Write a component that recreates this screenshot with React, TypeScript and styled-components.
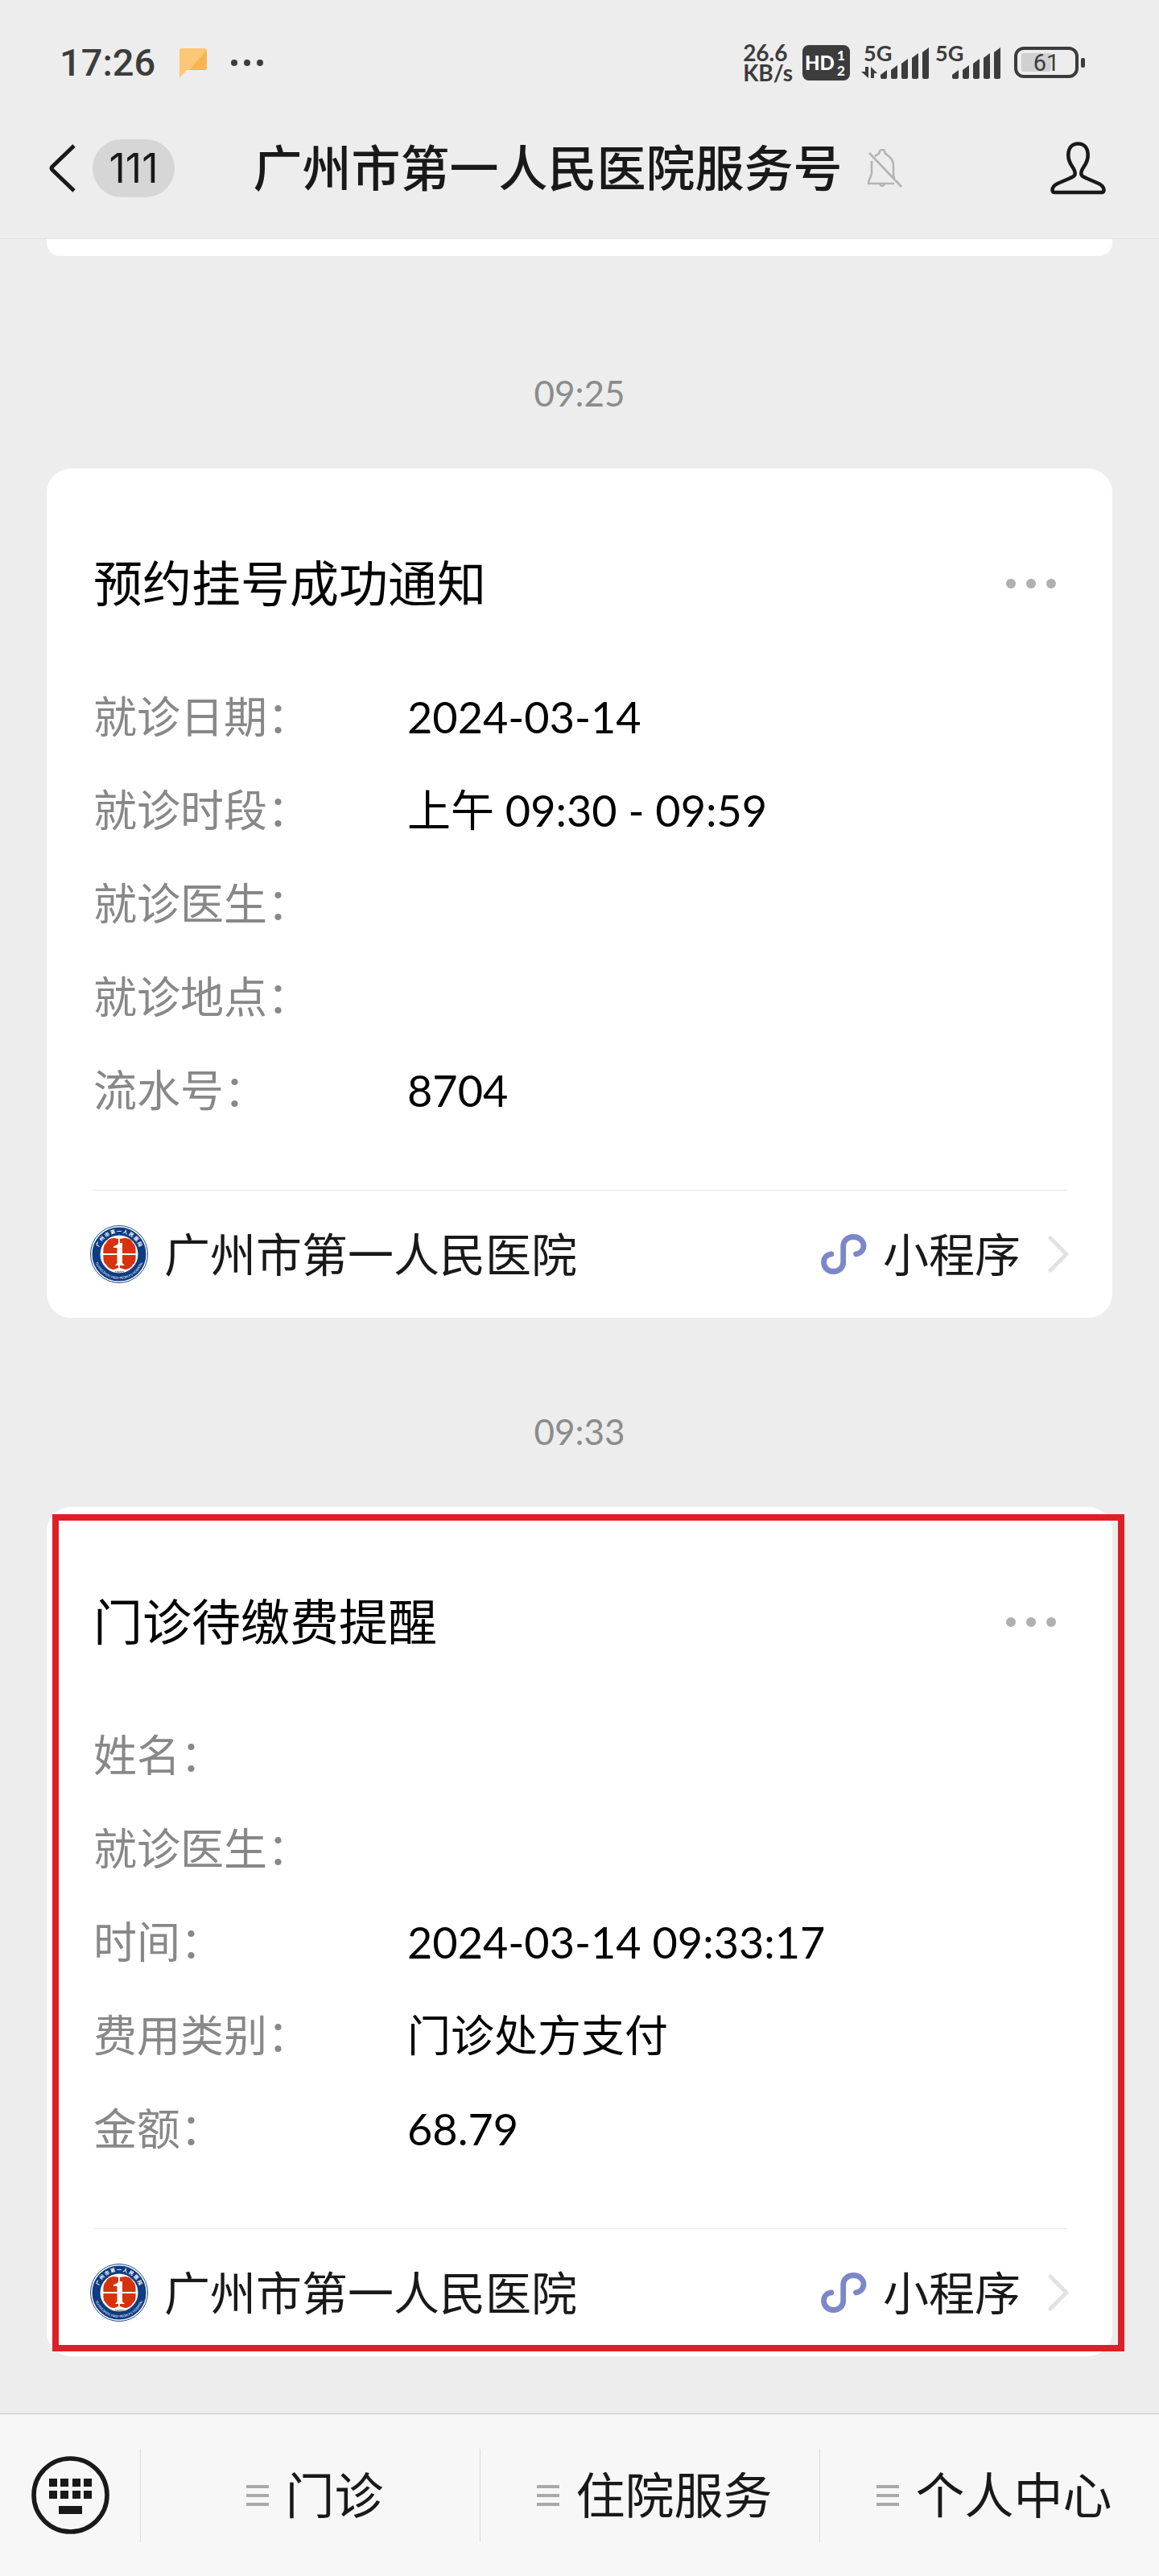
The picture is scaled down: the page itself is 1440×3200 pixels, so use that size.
import React from 'react';
import styled, { createGlobalStyle } from 'styled-components';

const GlobalStyle = createGlobalStyle`
  *, *::before, *::after { box-sizing: border-box; }
  body {
    margin: 0;
    background: #ededed;
    color: #191919;
    font-family: Lato, "Noto Sans CJK SC", sans-serif;
  }
  button {
    margin: 0;
    padding: 0;
    border: 0;
    background: none;
    color: inherit;
    font: inherit;
    cursor: pointer;
  }
  svg { display: block; flex: none; }
`;

const Page = styled.div`
  display: flex;
  flex-direction: column;
  min-height: 100vh;
`;

const Header = styled.header`
  padding-bottom: 34px;
  border-bottom: 1px solid #e4e4e4;
`;

const StatusBar = styled.div`
  display: flex;
  align-items: center;
  justify-content: space-between;
  height: 156px;
  padding: 0 92px 0 74px;
  color: #3c3c3c;
`;

const StatusGroup = styled.div<{ $gap: number }>`
  display: flex;
  align-items: center;
  gap: ${(p) => p.$gap}px;
`;

const Signals = styled.div`
  display: flex;
  align-items: center;
  gap: 4px;
  padding: 0 4px 0 2px;
`;

const Clock = styled.span`
  font: 500 47px/60px Roboto, sans-serif;
`;

const Speed = styled.span`
  display: flex;
  flex-direction: column;
  font: 700 28px/25px Lato, sans-serif;
`;

const NavBar = styled.nav`
  display: grid;
  grid-template-columns: 1fr auto 1fr;
  align-items: center;
  height: 106px;
  padding: 0 66px 0 61px;
`;

const BackButton = styled.button`
  display: flex;
  align-items: center;
  justify-self: start;
  gap: 20px;
`;

const Unread = styled.span`
  min-width: 102px;
  padding: 0 20px;
  border-radius: 36px;
  background: #d6d6d6;
  text-align: center;
  font: 400 50px/72px Inter, sans-serif;
`;

const TitleGroup = styled.div`
  display: flex;
  align-items: center;
  gap: 30px;
`;

const Title = styled.h1`
  margin: 0;
  font-size: 61px;
  line-height: 88px;
  font-weight: 500;
  white-space: nowrap;
`;

const ProfileButton = styled.button`
  justify-self: end;
`;

const Chat = styled.main`
  flex: 1;
  padding: 0 58px 71px;
`;

const PreviousCard = styled.div`
  height: 21px;
  margin-bottom: 29px;
  border-radius: 0 0 16px 16px;
  background: #fff;
`;

const Timestamp = styled.time`
  display: block;
  padding: 111px 0 64px;
  color: #8c8c8c;
  font-size: 44px;
  line-height: 60px;
  text-align: center;
`;

const Card = styled.article`
  position: relative;
  border-radius: 30px;
  background: #fff;
`;

const CardHead = styled.header`
  display: flex;
  align-items: center;
  justify-content: space-between;
  padding: 99px 70px 64px 58px;
`;

const CardTitle = styled.h2`
  margin: 0;
  color: #000;
  font-size: 61px;
  line-height: 88px;
  font-weight: 400;
`;

const Fields = styled.dl`
  display: grid;
  grid-template-columns: 390px 1fr;
  margin: 0 58px 65px;
  font-size: 54px;
  line-height: 116px;
`;

const FieldLabel = styled.dt`
  color: #888;
`;

const FieldValue = styled.dd`
  margin: 0;
  color: #000;
`;

const CardLink = styled.a`
  display: flex;
  align-items: center;
  justify-content: space-between;
  height: 158px;
  margin: 0 54px;
  color: inherit;
  font-size: 57px;
  line-height: 80px;
  text-decoration: none;
`;

const Divider = styled.hr`
  height: 1px;
  margin: 0 56px 0 58px;
  border: 0;
  background: #e5e5e5;
`;

const LinkPart = styled.span`
  display: flex;
  align-items: center;
  gap: 20px;
`;

const ArrowSlot = styled.span`
  padding-left: 14px;
`;

const Highlight = styled.div`
  position: absolute;
  inset: 9px -15px 6px 7px;
  border: 8px solid #dd2028;
  pointer-events: none;
`;

const MenuBar = styled.footer`
  display: flex;
  align-items: center;
  height: 202px;
  border-top: 1px solid #c9c9c9;
  background: #f7f7f7;
`;

const KeyboardButton = styled.button`
  display: flex;
  align-items: center;
  justify-content: center;
  width: 174px;
  height: 116px;
`;

const MenuButton = styled.button`
  display: flex;
  flex: 1;
  align-items: center;
  justify-content: center;
  gap: 20px;
  height: 116px;
  padding-left: 12px;
  border-left: 1px solid #dadada;
  font-size: 61px;
  line-height: 88px;
`;

const svgFont = 'Lato, sans-serif';

const FlagIcon = () => (
  <svg width="34" height="37" viewBox="0 0 34 37" aria-hidden="true">
    <path d="M3 0H31Q34 0 34 3V24Q34 27 31 27H9L0 37V3Q0 0 3 0Z" fill="#fdc778" />
    <path d="M34 2V24Q34 27 31 27H12Z" fill="#fcb44c" />
  </svg>
);

const Dots = ({ r, step, color }: { r: number; step: number; color: string }) => (
  <svg width={step * 2 + r * 2} height={r * 2} aria-hidden="true">
    {[0, 1, 2].map((i) => (
      <circle key={i} cx={r + i * step} cy={r} r={r} fill={color} />
    ))}
  </svg>
);

const HdIcon = () => (
  <svg width="59" height="44" viewBox="0 0 59 44" aria-label="HD 1 2">
    <rect width="59" height="44" rx="8" fill="#3c3c3c" />
    <g fill="#fff" fontFamily={svgFont} fontWeight="900">
      <text x="3" y="31" fontSize="24">HD</text>
      <text x="43" y="19" fontSize="17">1</text>
      <text x="43" y="38" fontSize="17">2</text>
    </g>
  </svg>
);

const SignalIcon = ({ data }: { data?: boolean }) => (
  <svg width="85" height="68" viewBox="0 -12 85 68" fill="#3c3c3c" aria-label="5G">
    <text x="3" y="20" fontFamily={svgFont} fontWeight="700" fontSize="27">5G</text>
    {data && (
      <path d="M5 27H9V41L0 33H5ZM12 41V27L20 35H16V41Z" />
    )}
    {[32, 26, 18, 11, 4].map((top, i) => (
      <path
        key={top}
        d={`M${24 + i * 13} ${top + 5}L${32 + i * 13} ${top - 1}V40Q${32 + i * 13} 42 ${30 + i * 13} 42H${26 + i * 13}Q${24 + i * 13} 42 ${24 + i * 13} 40Z`}
      />
    ))}
  </svg>
);

const BatteryIcon = () => (
  <svg width="88" height="56" viewBox="0 -8 88 56" aria-label="61%">
    <rect x="2" y="2" width="76" height="35" rx="10" fill="none" stroke="#3c3c3c" strokeWidth="4" />
    <rect x="9" y="8" width="37" height="23" rx="3" fill="#d0d0d0" />
    <rect x="83" y="14" width="5" height="12" rx="2" fill="#3c3c3c" />
    <text x="40" y="30" textAnchor="middle" fontFamily="Roboto, sans-serif" fontSize="29" fill="#3c3c3c">61</text>
  </svg>
);

const BackIcon = () => (
  <svg width="34" height="60" viewBox="0 0 34 60" fill="none" stroke="#191919" strokeWidth="5" strokeLinejoin="round" aria-hidden="true">
    <path d="M31 2L4 28Q2 30 4 32L31 58" />
  </svg>
);

const MutedIcon = () => (
  <svg width="44" height="48" viewBox="0 0 44 48" fill="none" stroke="#b4b4b4" strokeWidth="2.6" aria-hidden="true">
    <path d="M10 9Q14 7 15.500 5C15.500 -0.500 22.500 -0.500 22.500 5Q24 7 27 9C31 12 33 16 33 21V33L34 36" />
    <path d="M6 15V30C6 35 2 37 2 43H34" />
    <path d="M16 44Q19 48 22 44" />
    <path d="M3 5L43 47" />
  </svg>
);

const PersonIcon = () => (
  <svg width="69" height="66" viewBox="0 0 69 66" fill="none" stroke="#191919" strokeWidth="4.600" strokeLinejoin="round" aria-hidden="true">
    <path d="M30.500 41C32.500 33 22.300 30 22.300 17C22.300 8 26.500 2.500 34.500 2.500C42.500 2.500 46.700 8 46.700 17C46.700 30 36.500 33 38.500 41C39 43 42 44 45 45.500L60 52C65 54.500 66.500 57 66.500 60Q66.500 63 63.500 63H5.500Q2.500 63 2.500 60C2.500 57 4 54.500 9 52L24 45.500C27 44 30 43 30.500 41Z" />
  </svg>
);

const HospitalLogo = ({ id }: { id: string }) => (
  <svg width="72" height="72" viewBox="0 0 72 72" aria-hidden="true">
    <circle cx="36" cy="36" r="35.500" fill="#fff" stroke="#1c4683" strokeWidth="1" />
    <circle cx="36" cy="36" r="28.500" fill="none" stroke="#0d3c82" strokeWidth="10" />
    <path id={`${id}-top`} d="M9.500 36A26.500 26.500 0 0 1 62.500 36" fill="none" />
    <path id={`${id}-bottom`} d="M5 36A31 31 0 0 0 67 36" fill="none" />
    <text fontFamily="Noto Sans CJK SC, sans-serif" fontSize="6" fontWeight="700" fill="#fff" textAnchor="middle">
      <textPath href={`#${id}-top`} startOffset="50%">广 州 市 第 一 人 民 医 院</textPath>
    </text>
    <text fontFamily={svgFont} fontSize="4" fill="#fff" textAnchor="middle">
      <textPath href={`#${id}-bottom`} startOffset="50%">GUANGZHOU FIRST PEOPLE'S HOSPITAL</textPath>
    </text>
    <g fill="#d8320c">
      <path d="M35 35H16.500C16 29 17 24 20 22C21 18 26 16 30 16L35 17Z" />
      <path d="M37 35H56.500C57 29 56 24 53 22C52 18 47 16 43 16L37 17Z" />
      <path d="M35 37H16.500C16 43 17 47 20 49C22 53 26 55 30 55L35 53Z" />
      <path d="M37 37H56.500C57 43 56 47 53 49C51 53 47 55 43 55L37 53Z" />
    </g>
    <path d="M29 26Q34 25 35 22H40V47L43 50H31L33.500 47V28H29Z" fill="#fff" />
    <text x="36" y="61" fontFamily={svgFont} fontSize="5" fill="#333" textAnchor="middle">1899</text>
  </svg>
);

const MiniProgramIcon = () => (
  <svg width="57" height="50" viewBox="0 0 57 50" fill="none" stroke="#7c87c9" strokeWidth="6.800" strokeLinecap="round" aria-hidden="true">
    <path d="M12.800 24.800C7 25.500 3.500 30 3.500 35C3.500 42 9 46.500 15.500 46.500C22 46.500 27.700 42 27.700 35V15C27.700 8.500 33 3.500 40.500 3.500C47.500 3.500 53 8.500 53 14.500C53 20 49 24.300 43.500 24.800" />
  </svg>
);

const ArrowIcon = () => (
  <svg width="26" height="46" viewBox="0 0 26 46" fill="none" stroke="#e2e2e2" strokeWidth="5" strokeLinecap="round" strokeLinejoin="round" aria-hidden="true">
    <path d="M3 3L23 23L3 43" />
  </svg>
);

const KeyboardIcon = () => (
  <svg width="97" height="97" viewBox="0 0 97 97" aria-hidden="true">
    <circle cx="48.500" cy="48.500" r="45.500" fill="none" stroke="#191919" strokeWidth="5.600" />
    <g fill="#191919">
      {[22, 36, 51, 65].map((x) => (
        <React.Fragment key={x}>
          <rect x={x} y="28" width="10" height="10" />
          <rect x={x} y="43" width="10" height="10" />
        </React.Fragment>
      ))}
      <rect x="34" y="62" width="29" height="10" />
    </g>
  </svg>
);

const MenuIcon = () => (
  <svg width="28" height="26" viewBox="0 0 28 26" fill="#a9a9a9" aria-hidden="true">
    <rect width="28" height="4" />
    <rect y="11" width="28" height="4" />
    <rect y="22" width="28" height="4" />
  </svg>
);

type Notice = {
  id: string;
  time: string;
  title: string;
  fields: [string, string][];
  highlighted?: boolean;
};

const notices: Notice[] = [
  {
    id: 'booking',
    time: '09:25',
    title: '预约挂号成功通知',
    fields: [
      ['就诊日期：', '2024-03-14'],
      ['就诊时段：', '上午 09:30 - 09:59'],
      ['就诊医生：', ''],
      ['就诊地点：', ''],
      ['流水号：', '8704'],
    ],
  },
  {
    id: 'payment',
    time: '09:33',
    title: '门诊待缴费提醒',
    highlighted: true,
    fields: [
      ['姓名：', ''],
      ['就诊医生：', ''],
      ['时间：', '2024-03-14 09:33:17'],
      ['费用类别：', '门诊处方支付'],
      ['金额：', '68.79'],
    ],
  },
];

const NoticeCard = ({ notice }: { notice: Notice }) => (
  <Card>
    <CardHead>
      <CardTitle>{notice.title}</CardTitle>
      <button aria-label="更多">
        <Dots r={6} step={25} color="#b0b0b0" />
      </button>
    </CardHead>
    <Fields>
      {notice.fields.map(([label, value]) => (
        <React.Fragment key={label}>
          <FieldLabel>{label}</FieldLabel>
          <FieldValue>{value}</FieldValue>
        </React.Fragment>
      ))}
    </Fields>
    <Divider />
    <CardLink href="#">
      <LinkPart>
        <HospitalLogo id={notice.id} />
        广州市第一人民医院
      </LinkPart>
      <LinkPart>
        <MiniProgramIcon />
        小程序
        <ArrowSlot>
          <ArrowIcon />
        </ArrowSlot>
      </LinkPart>
    </CardLink>
    {notice.highlighted && <Highlight />}
  </Card>
);

export default function App() {
  return (
    <Page>
      <GlobalStyle />
      <Header>
        <StatusBar>
          <StatusGroup $gap={30}>
            <Clock>17:26</Clock>
            <FlagIcon />
            <Dots r={4} step={16} color="#3c3c3c" />
          </StatusGroup>
          <StatusGroup $gap={12}>
            <Speed>
              <span>26.6</span>
              <span>KB/s</span>
            </Speed>
            <HdIcon />
            <Signals>
              <SignalIcon data />
              <SignalIcon />
            </Signals>
            <BatteryIcon />
          </StatusGroup>
        </StatusBar>
        <NavBar>
          <BackButton aria-label="返回">
            <BackIcon />
            <Unread>111</Unread>
          </BackButton>
          <TitleGroup>
            <Title>广州市第一人民医院服务号</Title>
            <MutedIcon />
          </TitleGroup>
          <ProfileButton aria-label="资料">
            <PersonIcon />
          </ProfileButton>
        </NavBar>
      </Header>
      <Chat>
        <PreviousCard />
        {notices.map((notice) => (
          <React.Fragment key={notice.id}>
            <Timestamp>{notice.time}</Timestamp>
            <NoticeCard notice={notice} />
          </React.Fragment>
        ))}
      </Chat>
      <MenuBar>
        <KeyboardButton aria-label="键盘">
          <KeyboardIcon />
        </KeyboardButton>
        {['门诊', '住院服务', '个人中心'].map((item) => (
          <MenuButton key={item}>
            <MenuIcon />
            {item}
          </MenuButton>
        ))}
      </MenuBar>
    </Page>
  );
}
